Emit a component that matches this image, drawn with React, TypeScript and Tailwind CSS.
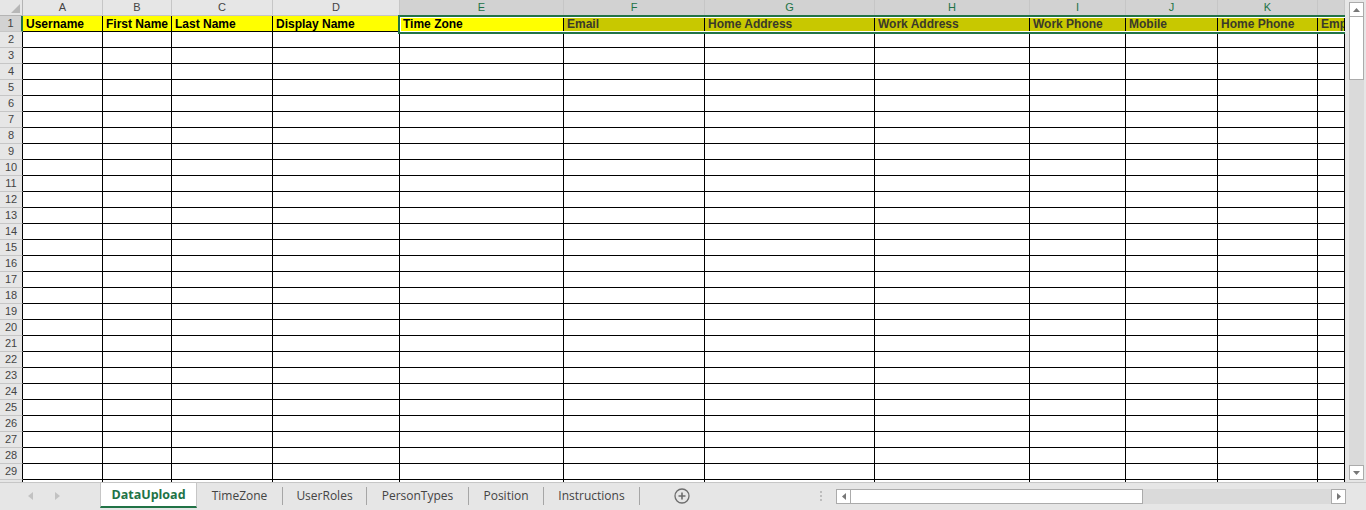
import React from "react"

const cols = [
  { letter: "A", title: "Username" },
  { letter: "B", title: "First Name" },
  { letter: "C", title: "Last Name" },
  { letter: "D", title: "Display Name" },
  { letter: "E", title: "Time Zone" },
  { letter: "F", title: "Email" },
  { letter: "G", title: "Home Address" },
  { letter: "H", title: "Work Address" },
  { letter: "I", title: "Work Phone" },
  { letter: "J", title: "Mobile" },
  { letter: "K", title: "Home Phone" },
  { letter: "", title: "Employee Number" },
]

const tabs = [
  { name: "TimeZone", w: "w-[85px]" },
  { name: "UserRoles", w: "w-[83px]" },
  { name: "PersonTypes", w: "w-[101px]" },
  { name: "Position", w: "w-[74px]" },
  { name: "Instructions", w: "w-[95px]" },
]

const rows = Array.from({ length: 29 }, (_, i) => i + 2)

function headerCellClass(i: number) {
  if (i <= 4) return "bg-[#ffff00] text-black"
  return "bg-[#c8c800] text-[#3a3a2a]"
}

export default function App() {
  return (
    <div className="w-[1366px] h-[510px] bg-[#e6e6e6] flex flex-col overflow-hidden font-['Liberation_Sans',Arial,sans-serif]">
      <div className="flex h-[482px]">
        {/* Sheet grid */}
        <div className="relative w-[1345px] h-[482px] overflow-hidden bg-white">
          <div className="grid grid-cols-[23px_80px_69px_101px_127px_164px_141px_170px_155px_96px_92px_100px_27px]">
            {/* column letters */}
            <div className="h-[16px] bg-[#e6e6e6] border-r border-b border-[#b4b4b4] flex items-end justify-end p-[2px]">
              <svg width="9" height="9" viewBox="0 0 9 9">
                <path d="M9 0 L9 9 L0 9 Z" fill="#b7b7b7" />
              </svg>
            </div>
            {cols.map((c, i) => (
              <div
                key={i}
                className={`h-[16px] border-r border-b border-[#c6c6c6] flex items-center justify-center text-[11px] leading-none ${
                  i >= 4 ? "bg-[#d2d2d2] text-[#217346]" : "bg-[#e6e6e6] text-[#444]"
                }`}
              >
                {c.letter}
              </div>
            ))}

            {/* row 1 */}
            <div className="h-[16px] bg-[#d2d2d2] border-r-2 border-r-[#217346] border-b border-b-[#c6c6c6] flex items-center justify-center text-[11px] text-[#444] leading-none">
              1
            </div>
            {cols.map((c, i) => (
              <div
                key={i}
                className={`h-[16px] border-r border-b border-black flex items-center pl-[3px] text-[12px] font-bold leading-none whitespace-nowrap overflow-hidden ${headerCellClass(i)}`}
              >
                {c.title}
              </div>
            ))}

            {/* empty rows */}
            {rows.map((r) => (
              <React.Fragment key={r}>
                <div className="h-[16px] bg-[#e6e6e6] border-r border-r-black border-b border-b-[#c6c6c6] flex items-center justify-center text-[11px] text-[#444] leading-none">
                  {r}
                </div>
                {cols.map((c, i) => (
                  <div key={i} className="h-[16px] border-r border-b border-black bg-white" />
                ))}
              </React.Fragment>
            ))}
          </div>

          {/* selection box E1:L1 */}
          <div className="absolute left-[398px] top-[15px] w-[980px] h-[19px] border-2 border-[#217346] pointer-events-none">
            <div className="w-full h-full border border-white" />
          </div>
        </div>

        {/* Vertical scrollbar */}
        <div className="w-[21px] h-[482px] bg-[#e6e6e6] flex flex-col items-center pl-[1px] pt-[2px] pb-[2px]">
          <div className="w-[15px] flex-1 bg-[#dadada] flex flex-col">
            <div className="h-[15px] bg-white border border-[#ababab] flex items-center justify-center">
              <svg width="7" height="4" viewBox="0 0 7 4">
                <path d="M0 4 L3.5 0 L7 4 Z" fill="#777" />
              </svg>
            </div>
            <div className="h-[63px] bg-white border border-[#ababab] border-t-0" />
            <div className="flex-1" />
            <div className="h-[15px] bg-white border border-[#ababab] flex items-center justify-center">
              <svg width="7" height="4" viewBox="0 0 7 4">
                <path d="M0 0 L7 0 L3.5 4 Z" fill="#777" />
              </svg>
            </div>
          </div>
        </div>
      </div>

      {/* Sheet tabs bar */}
      <div className="h-[28px] flex items-start border-t border-[#c6c6c6] font-['Open_Sans','Noto_Sans',sans-serif]">
        <div className="w-[100px] h-full flex items-center gap-[22px] pl-[28px] pb-[2px]">
          <svg width="5" height="8" viewBox="0 0 5 8">
            <path d="M5 0 L5 8 L0 4 Z" fill="#c2c2c2" />
          </svg>
          <svg width="5" height="8" viewBox="0 0 5 8">
            <path d="M0 0 L5 4 L0 8 Z" fill="#c2c2c2" />
          </svg>
        </div>
        <div className="w-[97px] h-[25px] pt-[2px] bg-white border-x border-[#c6c6c6] border-b-2 border-b-[#217346] flex items-center justify-center text-[12.5px] font-bold text-[#217346]">
          DataUpload
        </div>
        {tabs.map((t) => (
          <div key={t.name} className="h-[26px] flex items-center">
            <div className={`${t.w} text-center text-[12px] text-[#444]`}>{t.name}</div>
            <div className="w-px h-[18px] bg-[#a6a6a6]" />
          </div>
        ))}
        <div className="ml-[34px] h-[26px] flex items-center">
          <svg width="16" height="16" viewBox="0 0 16 16">
            <circle cx="8" cy="8" r="7" fill="none" stroke="#6d6d6d" strokeWidth="1.3" />
            <path d="M8 4.5 V11.5 M4.5 8 H11.5" stroke="#6d6d6d" strokeWidth="1.6" />
          </svg>
        </div>
        <div className="ml-[130px] h-[26px] flex flex-col justify-center gap-[2px]">
          <div className="w-[2px] h-[2px] bg-[#bdbdbd]" />
          <div className="w-[2px] h-[2px] bg-[#bdbdbd]" />
          <div className="w-[2px] h-[2px] bg-[#bdbdbd]" />
        </div>
        {/* Horizontal scrollbar */}
        <div className="ml-[14px] mt-[6px] w-[510px] h-[15px] bg-[#dadada] flex">
          <div className="w-[15px] h-full bg-white border border-[#ababab] flex items-center justify-center">
            <svg width="4" height="7" viewBox="0 0 4 7">
              <path d="M4 0 L4 7 L0 3.5 Z" fill="#777" />
            </svg>
          </div>
          <div className="w-[292px] h-full bg-white border border-l-0 border-[#ababab]" />
          <div className="flex-1" />
          <div className="w-[15px] h-full bg-white border border-[#ababab] flex items-center justify-center">
            <svg width="4" height="7" viewBox="0 0 4 7">
              <path d="M0 0 L4 3.5 L0 7 Z" fill="#777" />
            </svg>
          </div>
        </div>
      </div>
    </div>
  )
}
